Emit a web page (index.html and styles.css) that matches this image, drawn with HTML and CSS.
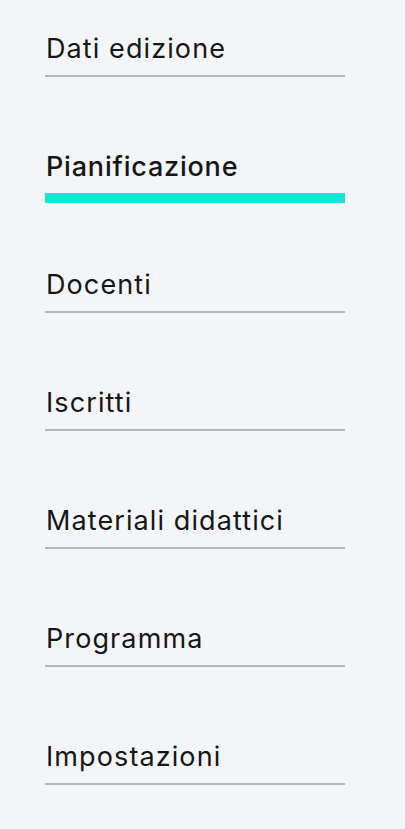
FILE: index.html
```html
<!DOCTYPE html>
<html lang="it">
<head>
<meta charset="utf-8">
<title>Menu edizione</title>
<link rel="stylesheet" href="styles.css">
</head>
<body>
<nav class="side-nav">
  <a class="nav-item" href="#"><span class="nav-label">Dati edizione</span><span class="nav-line"></span></a>
  <a class="nav-item active" href="#"><span class="nav-label">Pianificazione</span><span class="nav-line"></span></a>
  <a class="nav-item" href="#"><span class="nav-label">Docenti</span><span class="nav-line"></span></a>
  <a class="nav-item" href="#"><span class="nav-label">Iscritti</span><span class="nav-line"></span></a>
  <a class="nav-item" href="#"><span class="nav-label">Materiali didattici</span><span class="nav-line"></span></a>
  <a class="nav-item" href="#"><span class="nav-label">Programma</span><span class="nav-line"></span></a>
  <a class="nav-item" href="#"><span class="nav-label">Impostazioni</span><span class="nav-line"></span></a>
</nav>
</body>
</html>
```
FILE: styles.css
```css
html, body {
  margin: 0;
  padding: 0;
  background: #f4f5f9;
}
body {
  font-family: Inter, Roboto, "Liberation Sans", sans-serif;
  color: #161616;
  min-height: 829px;
}
.side-nav {
  display: flex;
  flex-direction: column;
  gap: 72px;
  width: 300px;
  padding: 31px 0 0 45px;
}
.nav-item {
  display: flex;
  flex-direction: column;
  text-decoration: none;
  color: inherit;
}
.nav-label {
  font-size: 27px;
  line-height: 36px;
  letter-spacing: 1.1px;
  padding-left: 1px;
  margin-bottom: 8px;
}
.nav-line {
  display: block;
  height: 2px;
  background: #b6b7bc;
}
.nav-item.active .nav-label {
  font-weight: 500;
  letter-spacing: 0.8px;
}
.nav-item.active .nav-line {
  height: 10px;
  margin-bottom: -8px;
  background: #14e6d2;
}
```
